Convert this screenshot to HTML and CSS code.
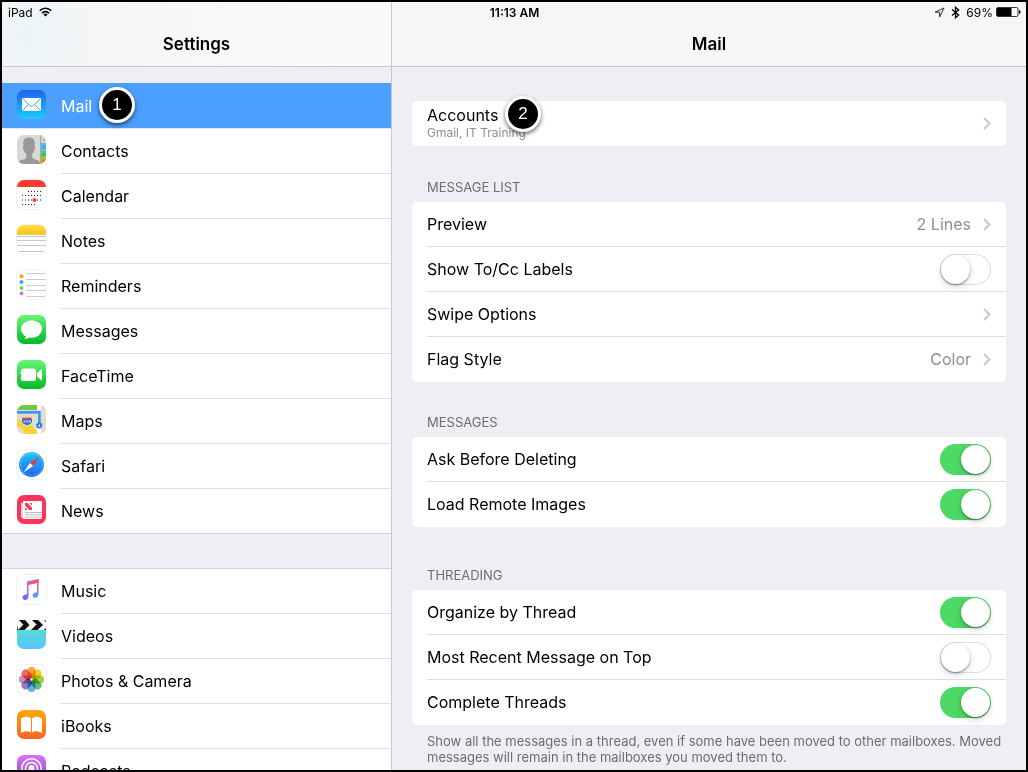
FILE: index.html
```html
<!DOCTYPE html>
<html lang="en">
<head>
<meta charset="utf-8">
<meta name="viewport" content="width=device-width, initial-scale=1">
<title>Settings</title>
<link rel="stylesheet" href="styles.css">
</head>
<body>
<div class="device">
  <div class="status">
    <div class="status-side">
      <span>iPad</span>
      <svg width="13" height="10" viewBox="0 0 13 10" fill="none" stroke="#000" stroke-width="1.6"><path d="M.8 3.8C4 .4 9 .4 12.200 3.800M3 6.100c2-2 5-2 7 0"/><path d="M4.300 7.400c1.300-1.200 3.100-1.200 4.400 0L6.500 9.600z" fill="#000" stroke="none"/></svg>
    </div>
    <span class="clock">11:13 AM</span>
    <div class="status-side status-end">
      <svg width="11" height="11" viewBox="0 0 11 11" fill="none" stroke="#333" stroke-width="1"><path d="M10 1 1 5.200h4.600V10z"/></svg>
      <svg class="bluetooth" width="9" height="13" viewBox="0 0 9 13" fill="none" stroke="#000" stroke-width="1.300"><path d="M1 3.600 7.600 9 4.500 11.700V1.300L7.600 4 1 9.400"/></svg>
      <span>69%</span>
      <svg width="25" height="10" viewBox="0 0 25 10"><rect x=".5" y=".5" width="21.500" height="9" rx="1.500" fill="none" stroke="#333"/><path d="M1 1h14.500v8H1z"/><path d="M23 3c2 .4 2 3.600 0 4z"/></svg>
    </div>
  </div>

  <aside class="sidebar">
    <header class="bar bar-tinted"><h1>Settings</h1></header>
    <nav class="nav">
      <ul class="nav-list">
        <li><a class="nav-row selected" href="#mail">
          <svg class="icon" viewBox="0 0 29 29"><defs><linearGradient id="gMail" x2="0" y2="1"><stop stop-color="#1e63ee"/><stop offset="1" stop-color="#1bcbfb"/></linearGradient></defs><rect width="29" height="29" fill="url(#gMail)"/><rect x="5" y="8" width="19" height="13" rx="1" fill="#fff"/><path d="m5.500 8.500 7.300 7.200q1.700 1.500 3.400 0l7.300-7.200M5.500 20.500l5.800-6M23.500 20.500l-5.800-6" fill="none" stroke="#3b93ee" stroke-width=".9"/></svg>
          <span class="nav-label">Mail</span><span class="step step-one">1</span></a></li>
        <li><a class="nav-row" href="#contacts">
          <svg class="icon" viewBox="0 0 29 29"><rect width="29" height="29" fill="#d9d9d7"/><path d="M1 29c.2-2.500 1-3.500 4-4.200 3-.6 4.300-1.200 4.300-3.300v-2.300C7.500 17.500 7.200 15.500 6.500 14.500c-1-1.700-.9-3 0-3.600C5 4.500 8 2.500 12 2.500s6.800 2.500 5.600 8.400c1 .6.800 2-.1 3.600-.6 1-.8 3-2.300 4.700v2.300c0 2.100 1.500 2.700 4.300 3.300 2.700.6 3.500 1.700 3.500 4.200z" fill="#999"/><rect x="23" width="1" height="29" fill="#aaa"/><rect x="24" width="5" height="7" fill="#d5d5d3"/><rect x="24" y="8" width="5" height="7" fill="#4fb5fb"/><rect x="24" y="15.500" width="5" height="7" fill="#44ce5c"/><rect x="24" y="23" width="5" height="6" fill="#fb9110"/><path d="M26 4h1.500v1.500H26zM26 11h1.500v1.500H26zM26 18.500h1.500V20H26zM26 25h1.500v1.500H26z" fill="#000" opacity=".25"/></svg>
          <span class="nav-label">Contacts</span></a></li>
        <li><a class="nav-row" href="#calendar">
          <svg class="icon outlined" viewBox="0 0 29 29"><rect width="29" height="29" fill="#fff"/><rect width="29" height="7" fill="#ff3b30"/><g stroke="#222" stroke-width="1.200" stroke-dasharray="1 2"><path d="M11 11.500h13.500M5 15.500h19.500M5 20h19.500M5 24.500h13.500"/></g><circle cx="17.500" cy="20" r="2" fill="#ff3b30"/></svg>
          <span class="nav-label">Calendar</span></a></li>
        <li><a class="nav-row" href="#notes">
          <svg class="icon outlined" viewBox="0 0 29 29"><defs><linearGradient id="gNotes" x2="0" y2="1"><stop stop-color="#ffdd4c"/><stop offset="1" stop-color="#fdc60a"/></linearGradient></defs><rect width="29" height="29" fill="#fff"/><rect width="29" height="9" fill="url(#gNotes)"/><path d="M0 9.500h29" stroke="#c9b98a" stroke-width=".8"/><path d="M0 11.500h29M0 15.500h29M0 20.500h29M0 26.500h29" stroke="#c8c8c8"/></svg>
          <span class="nav-label">Notes</span></a></li>
        <li><a class="nav-row" href="#reminders">
          <svg class="icon outlined" viewBox="0 0 29 29"><rect width="29" height="29" fill="#fff"/><path d="M9 3.500h20M9 9.500h20M9 15.500h20M9 20.500h20M9 26.500h20" stroke="#cdcdcd"/><circle cx="4.500" cy="6.300" r="2" fill="#ff9c1a"/><circle cx="4.500" cy="12" r="2" fill="#2dadf8"/><circle cx="4.500" cy="18" r="2" fill="#6ddc4b"/><circle cx="4.500" cy="23.500" r="2" fill="#cf79e8"/></svg>
          <span class="nav-label">Reminders</span></a></li>
        <li><a class="nav-row" href="#messages">
          <svg class="icon" viewBox="0 0 29 29"><defs><linearGradient id="gGreen" x2="0" y2="1"><stop stop-color="#66f778"/><stop offset="1" stop-color="#07b825"/></linearGradient></defs><rect width="29" height="29" fill="url(#gGreen)"/><ellipse cx="14.500" cy="14" rx="10.500" ry="8.800" fill="#fff"/><path d="M9 20c.2 2-.5 3-1.700 4 2.500 0 4-.8 5.200-2z" fill="#fff"/></svg>
          <span class="nav-label">Messages</span></a></li>
        <li><a class="nav-row" href="#facetime">
          <svg class="icon" viewBox="0 0 29 29"><rect width="29" height="29" fill="url(#gGreen)"/><rect x="4" y="8.500" width="15" height="12.500" rx="2.500" fill="#fff"/><path d="m20 13 4-3.500q1-.6 1 .7v9q0 1.300-1 .7L20 16.500z" fill="#fff"/><rect x="3.400" y="12" width="1" height="1.500" fill="#fff"/></svg>
          <span class="nav-label">FaceTime</span></a></li>
        <li><a class="nav-row" href="#maps">
          <svg class="icon" viewBox="0 0 29 29"><rect width="29" height="29" fill="#e3dccb"/><path d="M0 0h20v5H0z" fill="#70c741"/><path d="M24 0h5v5z" fill="#f8bac8"/><path d="M0 14.500c5 0 6.500 2.500 8.500 5L17 29H9c-4-4-4-8-9-8z" fill="#ffd234"/><path d="M4 15h5L20 26v3h-6z" fill="#ffd234"/><path d="M0 5h20V0h4v29h-4V9H0z" fill="#fff"/><path d="M0 7.200h22.300V18" fill="none" stroke="#3f95f3" stroke-width="3"/><circle cx="22.300" cy="20.500" r="3" fill="#2479e9"/><path d="m22.300 18.700 1.300 3.300-1.300-.7-1.300.7z" fill="#fff"/><path d="M5.500 12.500q4.500 1 9 0c1 1.500 1.500 3 1 4.500-.5 2-3.500 3-5.500 4-2-1-5-2-5.500-4-.5-1.500 0-3 1-4.500z" fill="#2b73d9" stroke="#fff" stroke-width=".8"/><path d="M5.500 12.500h9l.6 2H5z" fill="#e4474b"/><path d="M6.500 15.500h2v2h-2zM9.300 15.500h2v2h-2zM12 15.500h2v2h-2z" fill="#fff" opacity=".6"/></svg>
          <span class="nav-label">Maps</span></a></li>
        <li><a class="nav-row" href="#safari">
          <svg class="icon outlined" viewBox="0 0 29 29"><defs><linearGradient id="gSafari" x2="0" y2="1"><stop stop-color="#20c5fb"/><stop offset="1" stop-color="#1e63ee"/></linearGradient></defs><rect width="29" height="29" fill="#fff"/><circle cx="14.500" cy="14.500" r="12.500" fill="url(#gSafari)"/><circle cx="14.500" cy="14.500" r="11" fill="none" stroke="#fff" stroke-width="1.200" stroke-dasharray=".5 1.200" opacity=".6"/><path d="M22.500 6.500 16 16l-3-3z" fill="#fb2f36"/><path d="m6.500 22.500 9.500-6.500-3-3z" fill="#fff"/></svg>
          <span class="nav-label">Safari</span></a></li>
        <li><a class="nav-row" href="#news">
          <svg class="icon" viewBox="0 0 29 29"><rect width="29" height="29" fill="#fd3459"/><path d="M4 8h2v15.500H6A2 2 0 0 1 4 21.500z" fill="#fbd0d7"/><path d="M6 6h19v16q0 2-2 2H6z" fill="#fff"/><path d="M8 8h2.500l4.500 4.800V15h-2.500L8 10.500zM12.300 8H15v2.600zM8 12.300V15h2.700z" fill="#f83a58"/><path d="M8 17.500h17M8 19.700h17M8 22h17" stroke="#b3b3b3" stroke-width=".9"/></svg>
          <span class="nav-label">News</span></a></li>
      </ul>
      <ul class="nav-list">
        <li><a class="nav-row" href="#music">
          <svg class="icon outlined" viewBox="0 0 29 29"><defs><linearGradient id="gMusic" gradientUnits="userSpaceOnUse" x1="20" y1="4" x2="10" y2="25"><stop stop-color="#fb5768"/><stop offset=".35" stop-color="#ef5c91"/><stop offset=".6" stop-color="#a564f2"/><stop offset="1" stop-color="#6f67fb"/></linearGradient><linearGradient id="gNote" x2="0" y2="1"><stop stop-color="#fb5768"/><stop offset=".6" stop-color="#9b72e0"/><stop offset="1" stop-color="#38b5f8"/></linearGradient></defs><rect width="29" height="29" fill="#fff"/><path d="M10 6.500 21.500 4v3.800L11.500 10v11.500c0 2-1.500 3.500-3.500 3.500-1.500 0-2.500-1-2.500-2.400 0-2.600 3-2.800 4.500-3.600z" fill="url(#gMusic)"/><path d="M20 4.500 21.500 4v15c0 2.500-1.500 3.800-3.300 3.800-1.700 0-2.500-1-2.500-2.300 0-2.600 3-2.600 4.300-3.400z" fill="url(#gNote)"/></svg>
          <span class="nav-label">Music</span></a></li>
        <li><a class="nav-row" href="#videos">
          <svg class="icon square-top" viewBox="0 0 29 29"><defs><linearGradient id="gVideo" x2="0" y2="1"><stop stop-color="#53e8c5"/><stop offset="1" stop-color="#5ac3fb"/></linearGradient></defs><rect width="29" height="29" fill="url(#gVideo)"/><rect width="29" height="10" fill="#f5f5f5"/><path d="M2 0h6l4.500 5H6.500zM15 0h6l5 5h-6zM27 0h2v2.500zM0 5l1 5H0zM1 10l5-5h6.500l-5 5zM14 10l5-5h7l-5.500 5zM27 10l2-2v2z" fill="#111"/></svg>
          <span class="nav-label">Videos</span></a></li>
        <li><a class="nav-row" href="#photos">
          <svg class="icon outlined petals" viewBox="0 0 29 29"><rect width="29" height="29" fill="#fff"/><g><rect x="10.500" y="2" width="8" height="11.500" rx="4" fill="#f9a23a"/><rect x="10.500" y="2" width="8" height="11.500" rx="4" fill="#e6d91f" transform="rotate(45 14.500 14.500)"/><rect x="10.500" y="2" width="8" height="11.500" rx="4" fill="#a9cf3d" transform="rotate(90 14.500 14.500)"/><rect x="10.500" y="2" width="8" height="11.500" rx="4" fill="#5dbf86" transform="rotate(135 14.500 14.500)"/><rect x="10.500" y="2" width="8" height="11.500" rx="4" fill="#6cacdf" transform="rotate(180 14.500 14.500)"/><rect x="10.500" y="2" width="8" height="11.500" rx="4" fill="#8b82c7" transform="rotate(225 14.500 14.500)"/><rect x="10.500" y="2" width="8" height="11.500" rx="4" fill="#cf86b8" transform="rotate(270 14.500 14.500)"/><rect x="10.500" y="2" width="8" height="11.500" rx="4" fill="#f16d60" transform="rotate(315 14.500 14.500)"/></g></svg>
          <span class="nav-label">Photos &amp; Camera</span></a></li>
        <li><a class="nav-row" href="#ibooks">
          <svg class="icon" viewBox="0 0 29 29"><defs><linearGradient id="gBooks" x2="0" y2="1"><stop stop-color="#ffa60a"/><stop offset="1" stop-color="#fb6425"/></linearGradient></defs><rect width="29" height="29" fill="url(#gBooks)"/><path d="M4 8.500C7 6.300 12 6 14 8.500v14C11.500 20.500 8 21 4 22.800zM25 8.500C22 6.300 17 6 15 8.500v14c2.500-2 6-1.500 10 .3z" fill="#fff"/></svg>
          <span class="nav-label">iBooks</span></a></li>
        <li><a class="nav-row" href="#podcasts">
          <svg class="icon" viewBox="0 0 29 29"><defs><linearGradient id="gPod" x2="0" y2="1"><stop stop-color="#d873f5"/><stop offset="1" stop-color="#8a35c9"/></linearGradient></defs><rect width="29" height="29" fill="url(#gPod)"/><g fill="none" stroke="#fff" stroke-width="1.500"><circle cx="14.500" cy="13.500" r="9.700"/><circle cx="14.500" cy="13.500" r="6"/></g><circle cx="14.500" cy="13" r="3" fill="#fff"/><path d="M12 17.500h5l-1 7h-3z" fill="#fff"/></svg>
          <span class="nav-label">Podcasts</span></a></li>
      </ul>
    </nav>
  </aside>

  <main class="detail">
    <header class="bar"><h2>Mail</h2></header>
    <div class="content">
      <section class="card">
        <a class="row" href="#accounts"><span class="row-inner"><span class="stack"><span>Accounts</span><span class="sub">Gmail, IT Training</span></span><svg class="chevron" viewBox="0 0 8 13"><path d="m1 1 5.500 5.500L1 12"/></svg></span><span class="step step-two">2</span></a>
      </section>

      <section class="group group-first">
        <h3>MESSAGE LIST</h3>
        <div class="card">
          <a class="row" href="#preview"><span class="row-inner"><span>Preview</span><span class="value">2 Lines</span><svg class="chevron" viewBox="0 0 8 13"><path d="m1 1 5.500 5.500L1 12"/></svg></span></a>
          <label class="row"><span class="row-inner"><span>Show To/Cc Labels</span><input class="switch" type="checkbox"></span></label>
          <a class="row" href="#swipe"><span class="row-inner"><span>Swipe Options</span><svg class="chevron" viewBox="0 0 8 13"><path d="m1 1 5.500 5.500L1 12"/></svg></span></a>
          <a class="row" href="#flag"><span class="row-inner"><span>Flag Style</span><span class="value">Color</span><svg class="chevron" viewBox="0 0 8 13"><path d="m1 1 5.500 5.500L1 12"/></svg></span></a>
        </div>
      </section>

      <section class="group">
        <h3>MESSAGES</h3>
        <div class="card">
          <label class="row"><span class="row-inner"><span>Ask Before Deleting</span><input class="switch" type="checkbox" checked></span></label>
          <label class="row"><span class="row-inner"><span>Load Remote Images</span><input class="switch" type="checkbox" checked></span></label>
        </div>
      </section>

      <section class="group group-spaced">
        <h3>THREADING</h3>
        <div class="card">
          <label class="row"><span class="row-inner"><span>Organize by Thread</span><input class="switch" type="checkbox" checked></span></label>
          <label class="row"><span class="row-inner"><span>Most Recent Message on Top</span><input class="switch" type="checkbox"></span></label>
          <label class="row"><span class="row-inner"><span>Complete Threads</span><input class="switch" type="checkbox" checked></span></label>
        </div>
        <p class="note">Show all the messages in a thread, even if some have been moved to other mailboxes. Moved messages will remain in the mailboxes you moved them to.</p>
      </section>
    </div>
  </main>
</div>
</body>
</html>
```

FILE: styles.css
```css
* { box-sizing: border-box; }

body {
  margin: 0;
  font-family: Inter, "Liberation Sans", sans-serif;
  font-size: 16px;
  color: #000;
}

a { color: inherit; text-decoration: none; }
h1, h2, h3, p, ul { margin: 0; padding: 0; }
ul { list-style: none; }

.device {
  display: grid;
  grid-template-columns: 390px minmax(0, 1fr);
  grid-template-rows: minmax(0, 1fr);
  height: 100vh;
  border: 2px solid #000;
  overflow: hidden;
  background: #efeef4;
}

/* Status bar shares the grid cell row with both panes */
.status {
  grid-area: 1 / 1 / 2 / 3;
  align-self: start;
  z-index: 2;
  display: grid;
  grid-template-columns: 1fr auto 1fr;
  align-items: center;
  height: 20px;
  padding: 0 5px 0 6px;
  font-size: 12px;
}
.status-side { display: flex; align-items: center; gap: 6px; }
.status-end { justify-content: flex-end; gap: 3px; }
.bluetooth { margin: 0 3px; }
.clock { font-weight: 600; }

.sidebar {
  grid-area: 1 / 1;
  border-right: 1px solid #c8c7cc;
  overflow: hidden;
}
.detail { grid-area: 1 / 2; overflow: hidden; }

.bar {
  display: flex;
  align-items: center;
  justify-content: center;
  height: 65px;
  padding-top: 20px;
  background: #f6f6f8;
  border-bottom: 1px solid #c8c7cc;
}
.bar-tinted {
  background: radial-gradient(circle at 28px 38px, #eaf5f8, rgba(245, 245, 245, 0) 70px), linear-gradient(90deg, #f5f5f5, #fafafa);
}
.bar h1, .bar h2 { font-size: 17px; font-weight: 600; line-height: 20px; }

.nav {
  display: flex;
  flex-direction: column;
  gap: 34px;
  padding-top: 16px;
}
.nav-list { background: #fff; border-top: 1px solid #d3d2d8; }
.nav-list:first-child { border-top-color: #4ba0ff; }
.nav-row {
  position: relative;
  display: flex;
  gap: 15px;
  height: 45px;
  padding-left: 15px;
}
.icon {
  flex: none;
  width: 29px;
  height: 29px;
  margin-top: 6px;
  border-radius: 7px;
}
.outlined { box-shadow: 0 0 0 1px #f2f2f2; }
.square-top { border-radius: 2px 2px 7px 7px; }
.petals g rect { mix-blend-mode: multiply; }
.nav-label {
  flex: 1;
  line-height: 44px;
  border-bottom: 1px solid #dddde0;
}
.nav-list li:last-child .nav-row { border-bottom: 1px solid #d3d2d8; }
.nav-list li:last-child .nav-label { border-bottom: 0; }
.selected { color: #fff; background: #4ba0ff; border-bottom: 1px solid #d9e8fb; }
.selected .nav-label { border-bottom: 0; }

.content { padding: 34px 20px 0; }
.card { background: #fff; border-radius: 5px; }
.row {
  position: relative;
  display: block;
  height: 45px;
  padding-left: 15px;
}
.row-inner {
  display: flex;
  align-items: center;
  height: 100%;
  padding-right: 15px;
  border-bottom: 1px solid #dddde0;
}
.row:last-child .row-inner { border-bottom-color: transparent; }
.row-inner > :first-child { flex: 1; }
.stack { display: flex; flex-direction: column; line-height: 20px; }
.sub { font-size: 12px; line-height: 16px; color: #8e8e93; }
.value { color: #8e8e93; margin-right: 12px; }
.chevron {
  width: 8px;
  height: 13px;
  fill: none;
  stroke: #c7c7cc;
  stroke-width: 2;
}

.group { padding-top: 32px; }
.group-first { padding-top: 33px; }
.group-spaced { padding-top: 40px; }
.group h3 {
  padding: 0 15px 7px;
  font-size: 13px;
  font-weight: 400;
  line-height: 16px;
  color: #6d6d72;
}
.note {
  padding: 8px 0 0 15px;
  font-size: 13px;
  line-height: 16px;
  color: #6d6d72;
}

.switch {
  appearance: none;
  width: 51px;
  height: 31px;
  margin: 0;
  padding: 1px;
  border-radius: 16px;
  background: #fff;
  box-shadow: inset 0 0 0 1px #dedede;
}
.switch::before {
  content: "";
  display: block;
  width: 29px;
  height: 29px;
  border-radius: 50%;
  background: #fff;
  box-shadow: 0 1px 2px rgba(0, 0, 0, .4), 0 3px 7px rgba(0, 0, 0, .15);
}
.switch:checked { background: #4cd964; box-shadow: none; }
.switch:checked::before { margin-left: 20px; }

/* Numbered callouts floating above rows */
.step {
  position: absolute;
  width: 36px;
  height: 36px;
  border: 3px solid #fff;
  border-radius: 50%;
  background: #000;
  color: #fff;
  font-family: "Liberation Sans", sans-serif;
  font-size: 17px;
  line-height: 30px;
  text-align: center;
  box-shadow: 0 2px 4px rgba(0, 0, 0, .6);
}
.step-one { left: 97px; top: 3px; z-index: 1; }
.step-two { left: 93px; top: -5px; }
```
